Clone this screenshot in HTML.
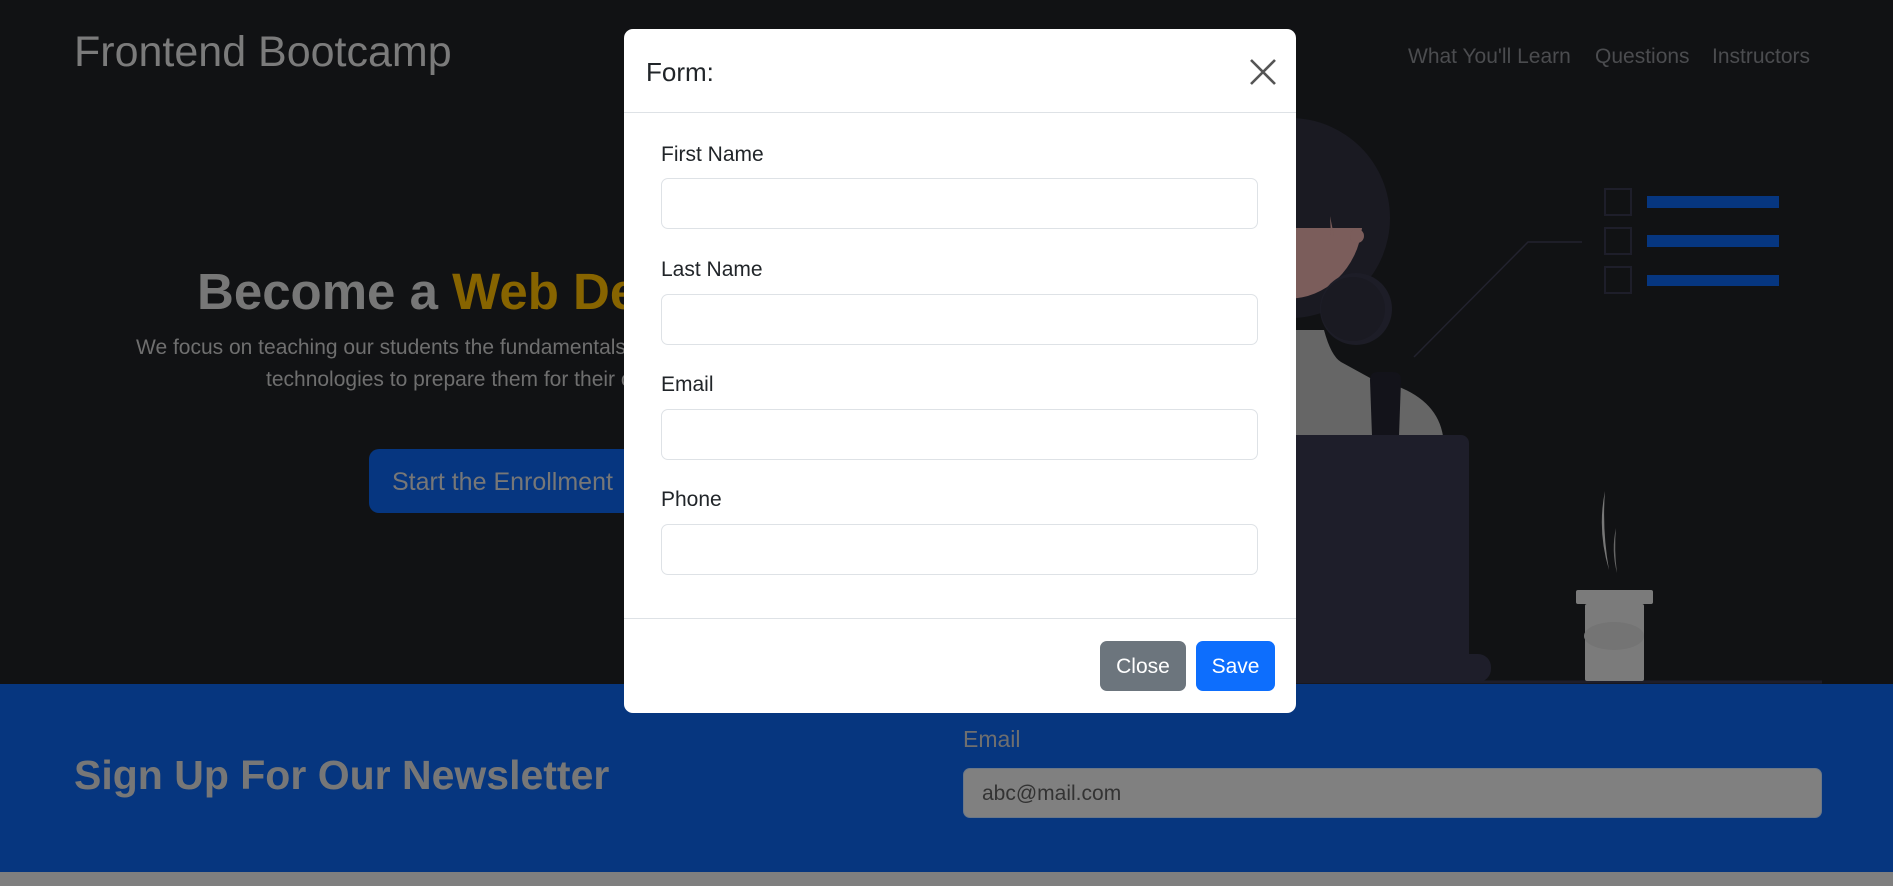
<!DOCTYPE html>
<html><head><meta charset="utf-8"><style>
*{margin:0;padding:0;box-sizing:border-box}
html,body{width:1893px;height:886px;overflow:hidden;background:#111214;font-family:"Liberation Sans",Arial,sans-serif}
.abs{position:absolute;white-space:nowrap}
#hero{position:absolute;left:0;top:0;width:1893px;height:684px;background:#111214}
#news{position:absolute;left:0;top:684px;width:1893px;height:188px;background:#06367f}
#strip{position:absolute;left:0;top:872px;width:1893px;height:14px;background:#7f7f7f}
.modal{position:absolute;left:624px;top:29px;width:672px;height:684px;background:#fff;border-radius:9px}
.lbl{position:absolute;left:37px;font-size:21px;color:#212529}
.inp{position:absolute;left:37px;width:597px;height:51px;border:1px solid #dee2e6;border-radius:7px;background:#fff}
.btn{position:absolute;top:612px;height:50px;border-radius:7px;color:#fff;font-size:21px;text-align:center;line-height:52px}
</style></head><body>
<div id="hero">
<svg width="1893" height="684" style="position:absolute;left:0;top:0">
<circle cx="1290" cy="218" r="100" fill="#1a1a22"/>
<path d="M1215 228 H1362 A74 80 0 0 1 1215 228 Z" fill="#7b5d5b"/>
<circle cx="1357" cy="236" r="7" fill="#7b5d5b"/>
<path d="M1330 216 L1334 236 L1331 236 Z" fill="#7b5d5b"/>
<circle cx="1356" cy="309" r="36" fill="#1d1d27"/>
<circle cx="1353" cy="309" r="32" fill="#1a1a22"/>
<path d="M1200 330 H1324 Q1331 356 1341 362 L1372 379 Q1436 392 1443 436 H1200 Z" fill="#666"/>
<path d="M1370 380 Q1370 372 1378 372 H1393 Q1401 372 1401 380 L1399 436 H1372 Z" fill="#13131a"/>
<rect x="1200" y="435" width="269" height="246" rx="8" fill="#1e1e2a"/>
<rect x="1200" y="654" width="291" height="28" rx="13" fill="#1e1e2a"/>
<line x1="1200" y1="682" x2="1822" y2="682" stroke="#1e1e2a" stroke-width="3"/>
<polyline points="1414,357 1528,242 1582,242" fill="none" stroke="#22222e" stroke-width="1.5"/>
<g fill="none" stroke="#1e1e2a" stroke-width="2">
<rect x="1605" y="189" width="26" height="26"/><rect x="1605" y="228" width="26" height="26"/><rect x="1605" y="267" width="26" height="26"/>
</g>
<g fill="#063680"><rect x="1647" y="196" width="132" height="12"/><rect x="1647" y="235" width="132" height="12"/><rect x="1647" y="275" width="132" height="11"/></g>
<path d="M1605 491 Q1597 530 1609 570 Q1602 530 1605 491 Z" fill="#777"/>
<path d="M1616 528 Q1611 550 1617 573 Q1614 550 1616 528 Z" fill="#666"/>
<rect x="1576" y="590" width="77" height="14" rx="2" fill="#7b7b7b"/>
<rect x="1585" y="604" width="59" height="77" rx="2" fill="#7b7b7b"/>
<ellipse cx="1614" cy="636" rx="30" ry="14" fill="#747474"/>
</svg>
<div class="abs" style="left:74px;top:28px;font-size:43px;color:#7b7b7b">Frontend Bootcamp</div>
<div class="abs" style="left:1408px;top:45px;font-size:21px;color:#4b4c4f">What You'll Learn</div>
<div class="abs" style="left:1595px;top:45px;font-size:21px;color:#4b4c4f">Questions</div>
<div class="abs" style="left:1712px;top:45px;font-size:21px;color:#4b4c4f">Instructors</div>
<div class="abs" style="left:197px;top:262px;font-size:51px;font-weight:bold;color:#777">Become a <span style="color:#876400">Web Developer</span></div>
<div class="abs" style="left:136px;top:336px;font-size:21px;color:#6f6f6f">We focus on teaching our students the fundamentals of the latest and</div>
<div class="abs" style="left:266px;top:368px;font-size:21px;color:#6f6f6f">technologies to prepare them for their careers.</div>
<div class="abs" style="left:369px;top:449px;width:290px;height:64px;background:#063680;border-radius:10px;color:#777;font-size:25px;line-height:66px;padding-left:23px">Start the Enrollment</div>
</div>
<div id="news">
<div class="abs" style="left:74px;top:68px;font-size:41px;font-weight:bold;color:#777">Sign Up For Our Newsletter</div>
<div class="abs" style="left:963px;top:42px;font-size:23px;color:#6f6f6f">Email</div>
<div class="abs" style="left:963px;top:84px;width:859px;height:50px;background:#808080;border-radius:7px;border:1px solid #6a7788;font-size:21px;color:#333;line-height:50px;padding-left:18px">abc@mail.com</div>
</div>
<div id="strip"></div>
<div class="modal">
<div class="abs" style="left:22px;top:28px;font-size:26px;color:#212529">Form:</div>
<svg width="30" height="30" style="position:absolute;left:624px;top:28px"><path d="M3 3 L27 27 M27 3 L3 27" stroke="#555" stroke-width="2.6"/></svg>
<div style="position:absolute;left:0;top:83px;width:672px;height:1px;background:#dee2e6"></div>
<div class="lbl" style="top:114px">First Name</div>
<div class="inp" style="top:149px"></div>
<div class="lbl" style="top:229px">Last Name</div>
<div class="inp" style="top:265px"></div>
<div class="lbl" style="top:344px">Email</div>
<div class="inp" style="top:380px"></div>
<div class="lbl" style="top:459px">Phone</div>
<div class="inp" style="top:495px"></div>
<div style="position:absolute;left:0;top:589px;width:672px;height:1px;background:#dee2e6"></div>
<div class="btn" style="left:476px;width:86px;background:#6c757d">Close</div>
<div class="btn" style="left:572px;width:79px;background:#0d6efd">Save</div>
</div>
</body></html>
